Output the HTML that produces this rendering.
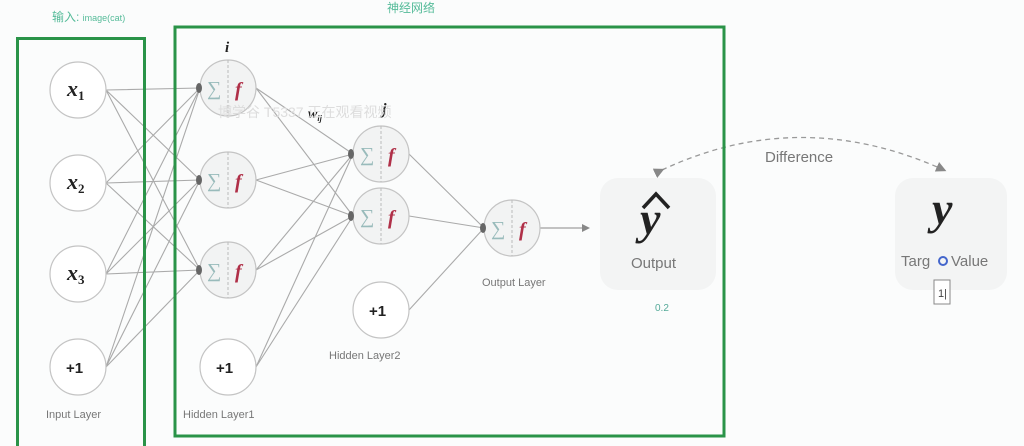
<!DOCTYPE html>
<html><head><meta charset="utf-8"><style>
html,body{margin:0;padding:0;background:#fbfcfc;}
body{width:1024px;height:446px;overflow:hidden;position:relative;font-family:"Liberation Sans","Noto Sans CJK SC",sans-serif;}
</style></head><body>
<svg width="1024" height="446" viewBox="0 0 1024 446" xmlns="http://www.w3.org/2000/svg" style="position:absolute;left:0;top:0">
<defs>
<marker id="ah" markerWidth="8" markerHeight="8" refX="6" refY="4" orient="auto"><path d="M0,0 L8,4 L0,8 z" fill="#888"/></marker>
</defs>
<rect x="600" y="178" width="116" height="112" rx="18" fill="#f3f4f4"/>
<rect x="895" y="178" width="112" height="112" rx="18" fill="#f3f4f4"/>
<g stroke="#aaa" stroke-width="1.1" fill="none">
<path d="M106,90L200,88M106,90L200,180M106,90L200,270
M106,183L200,88M106,183L200,180M106,183L200,270
M106,274L200,88M106,274L200,180M106,274L200,270
M106,367L200,88M106,367L200,180M106,367L200,270"/>
<path d="M256,88L353,154M256,88L353,216M256,180L353,154M256,180L353,216M256,270L353,154M256,270L353,216M256,367L353,154M256,367L353,216"/>
<path d="M409,154L484,228M409,216L484,228M409,310L484,228"/>
</g>
<path d="M540,228L588,228" stroke="#888" stroke-width="1" marker-end="url(#ah)"/>
<path d="M662,170 Q800,105 944,170" stroke="#999" stroke-width="1.3" stroke-dasharray="5,4" fill="none" marker-end="url(#ah)" marker-start="url(#ah)"/>
<g fill="#fff" stroke="#c4c4c4" stroke-width="1.2">
<circle cx="78" cy="90" r="28"/><circle cx="78" cy="183" r="28"/><circle cx="78" cy="274" r="28"/><circle cx="78" cy="367" r="28"/>
<circle cx="228" cy="367" r="28"/><circle cx="381" cy="310" r="28"/>
</g>
<g fill="#f2f3f3" stroke="#c4c4c4" stroke-width="1.2">
<circle cx="228" cy="88" r="28"/><circle cx="228" cy="180" r="28"/><circle cx="228" cy="270" r="28"/>
<circle cx="381" cy="154" r="28"/><circle cx="381" cy="216" r="28"/><circle cx="512" cy="228" r="28"/>
</g>
<g stroke="#bbb" stroke-dasharray="3,2">
<path d="M228,60V116M228,152V208M228,242V298M381,126V182M381,188V244M512,200V256"/>
</g>
<g fill="#666"><ellipse cx="199" cy="88" rx="3" ry="5"/><ellipse cx="199" cy="180" rx="3" ry="5"/><ellipse cx="199" cy="270" rx="3" ry="5"/><ellipse cx="351" cy="154" rx="3" ry="5"/><ellipse cx="351" cy="216" rx="3" ry="5"/><ellipse cx="483" cy="228" rx="3" ry="5"/></g>
<g font-family="Liberation Serif,serif" font-size="20" fill="#9bb">
<text x="207" y="95">∑</text><text x="207" y="187">∑</text><text x="207" y="277">∑</text><text x="360" y="161">∑</text><text x="360" y="223">∑</text><text x="491" y="235">∑</text>
</g>
<g font-family="Liberation Serif,serif" font-size="20" font-style="italic" font-weight="bold" fill="#b03048">
<text x="235" y="96">f</text><text x="235" y="188">f</text><text x="235" y="278">f</text><text x="388" y="162">f</text><text x="388" y="224">f</text><text x="519" y="236">f</text>
</g>
<g font-family="Liberation Serif,serif" font-style="italic" font-weight="bold" font-size="22" fill="#222">
<text x="67" y="96">x<tspan font-size="13" font-style="normal" dy="4">1</tspan></text>
<text x="67" y="189">x<tspan font-size="13" font-style="normal" dy="4">2</tspan></text>
<text x="67" y="280">x<tspan font-size="13" font-style="normal" dy="4">3</tspan></text>
</g>
<g font-family="Liberation Sans,sans-serif" font-weight="bold" font-size="15" fill="#222">
<text x="66" y="373">+1</text><text x="216" y="373">+1</text><text x="369" y="316">+1</text>
</g>
<g font-family="Liberation Serif,serif" font-style="italic" font-weight="bold" fill="#222">
<text x="225" y="52" font-size="15">i</text><text x="382" y="114" font-size="16">j</text><text x="308" y="118" font-size="14">w<tspan font-size="8" dy="3">ij</tspan></text>
<text x="640" y="234" font-size="46">y</text>
<text x="932" y="224" font-size="46">y</text>
</g>
<path d="M643,208 L656,194 L669,208" stroke="#222" stroke-width="3.5" fill="none"/>
<text x="218" y="117" font-size="14" fill="#ddd">博学谷 T5337 正在观看视频</text>
<g font-size="11" fill="#777">
<text x="46" y="418">Input Layer</text><text x="183" y="418">Hidden Layer1</text><text x="329" y="359">Hidden Layer2</text><text x="482" y="286">Output Layer</text>
</g>
<g font-size="15" fill="#777"><text x="631" y="268">Output</text><text x="901" y="266">Targ</text><text x="951" y="266">Value</text><text x="765" y="162">Difference</text></g>
<circle cx="943" cy="261" r="4" fill="none" stroke="#46c" stroke-width="2"/>
<rect x="934" y="280" width="16" height="24" fill="#fff" stroke="#888"/><text x="938" y="297" font-size="11" fill="#444">1|</text>
<text x="655" y="311" font-size="10" fill="#5a9">0.2</text>
<text x="52" y="21" font-size="12" fill="#5b9">输入: <tspan font-size="9">image(cat)</tspan></text>
<text x="387" y="12" font-size="12" fill="#5b9">神经网络</text>
<rect x="17.5" y="38.5" width="127" height="420" fill="none" stroke="#2a9348" stroke-width="3"/>
<rect x="175" y="27" width="549" height="409" fill="none" stroke="#2a9348" stroke-width="3"/>
</svg>
</body></html>
